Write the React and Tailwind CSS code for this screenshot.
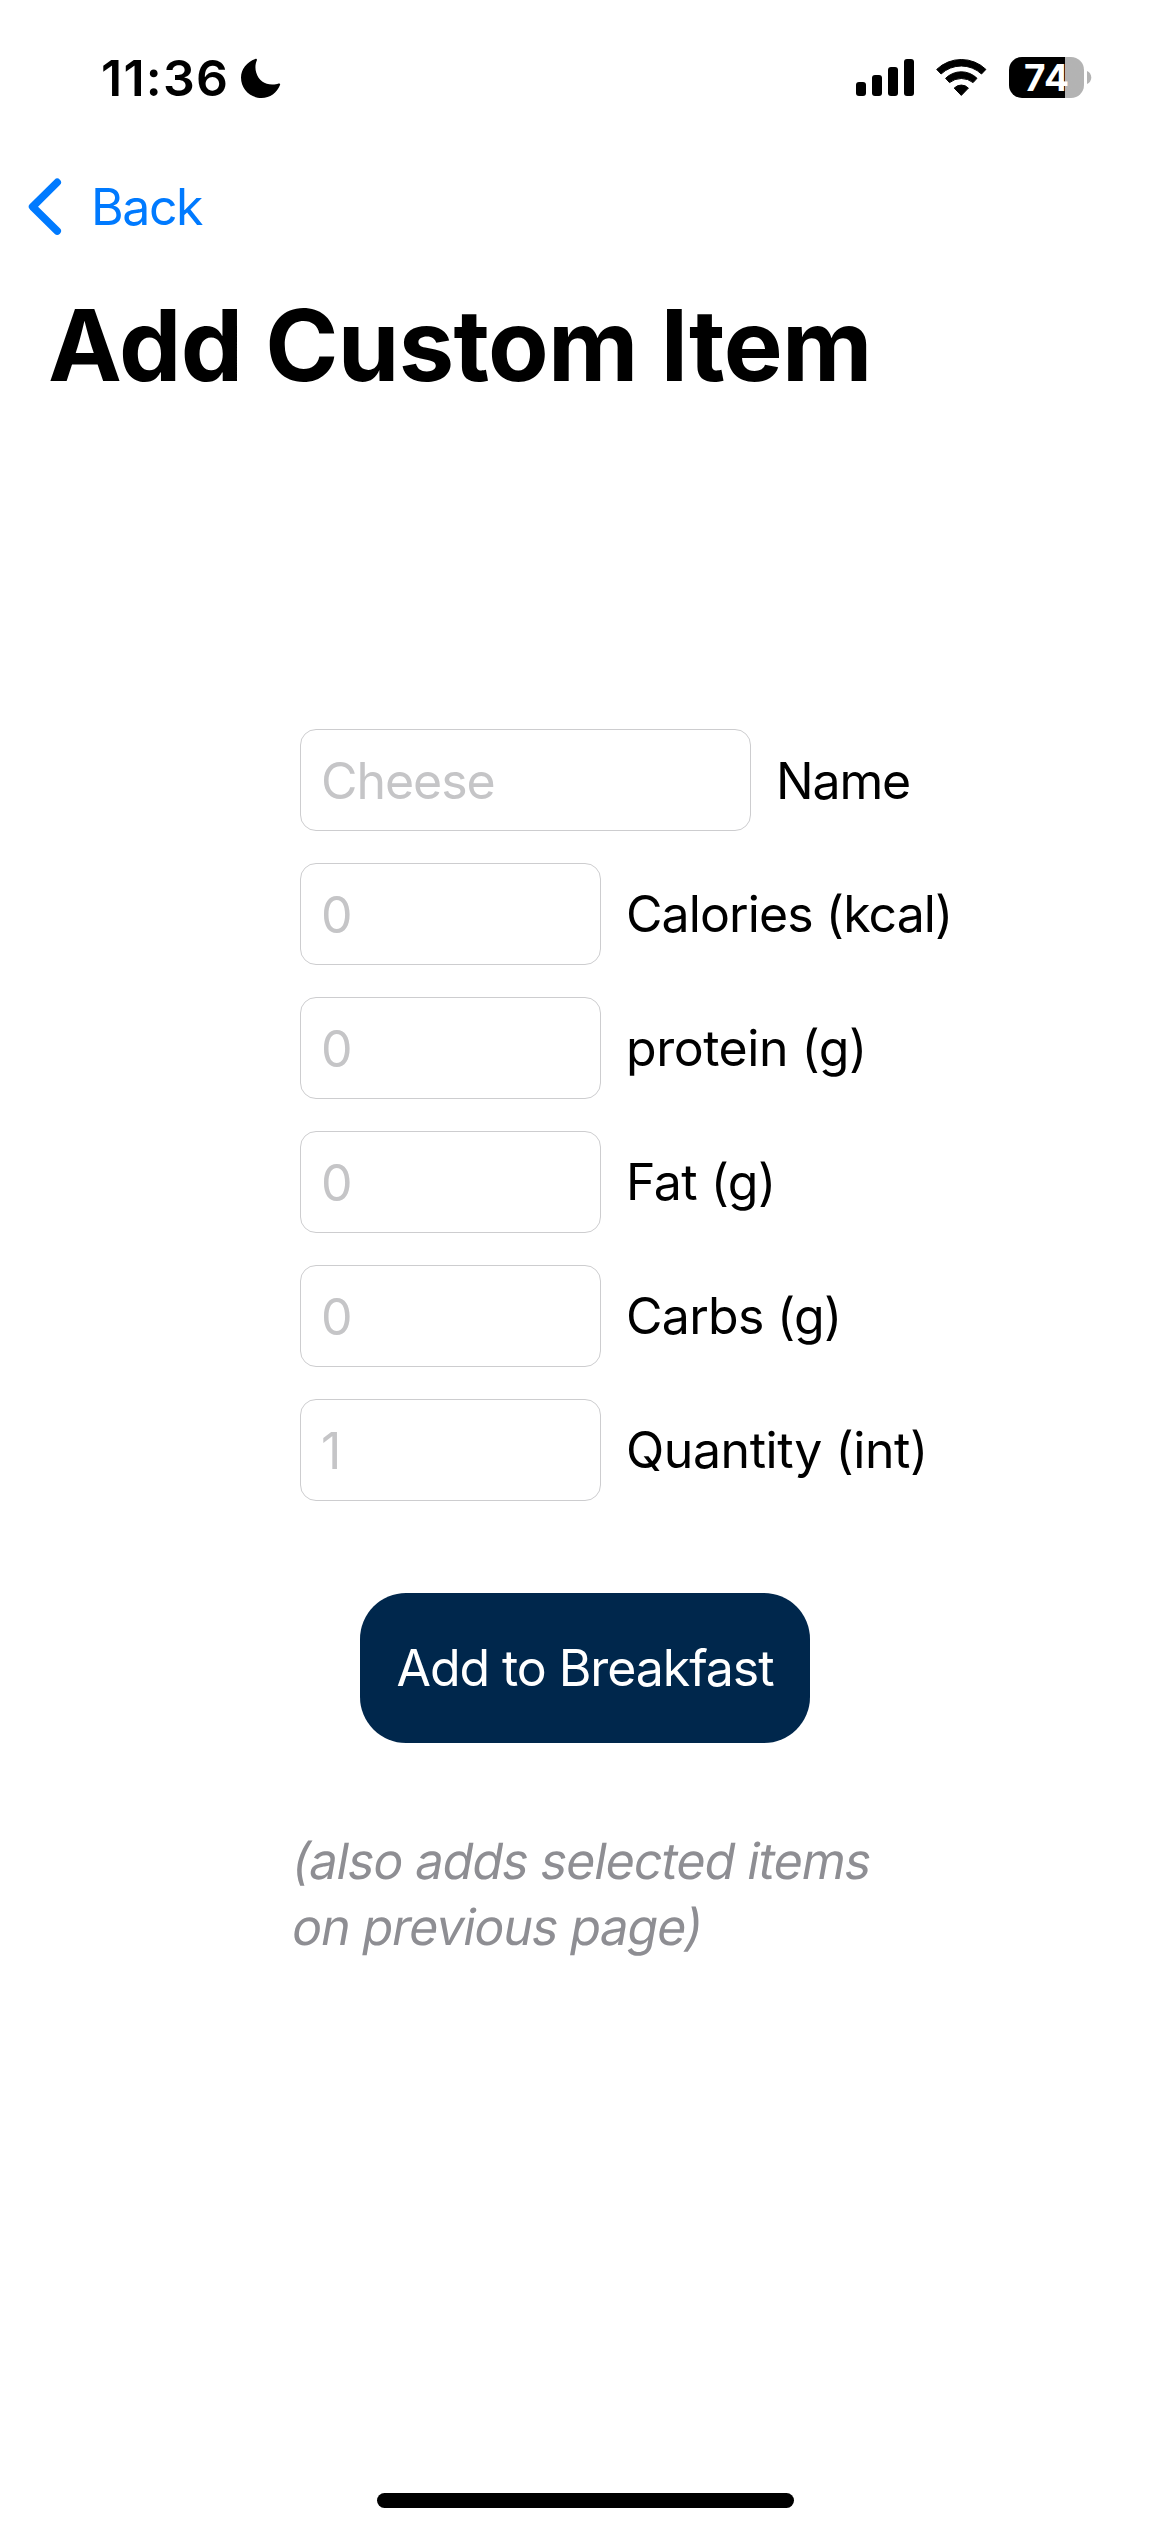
import React from "react";

const fields = [
  { label: "Name", placeholder: "Cheese", box: "w-[451px] tracking-[-1.06px]", text: "tracking-[-1.18px] pt-[2px]" },
  { label: "Calories (kcal)", placeholder: "0", box: "w-[301px]", text: "tracking-[-0.91px]" },
  { label: "protein (g)", placeholder: "0", box: "w-[301px]", text: "tracking-[-0.47px]" },
  { label: "Fat (g)", placeholder: "0", box: "w-[301px]", text: "tracking-[-0.52px]" },
  { label: "Carbs (g)", placeholder: "0", box: "w-[301px]", text: "tracking-[-0.7px]" },
  { label: "Quantity (int)", placeholder: "1", box: "w-[301px]", text: "tracking-[-0.43px]" },
];

function StatusBar() {
  return (
    <div className="flex h-[141px] shrink-0 items-start">
      <span className="mt-12 ml-[101px] w-[140px] text-[50px] leading-[60px] font-semibold tracking-[1.24px]">11:36</span>
      <svg className="mt-[58px]" width="40" height="40" viewBox="0 0 40 40">
        <path
          d="M14.2 .9C15.5 .3 16.3 1 15.8 2.4C14.2 6 14 10.5 15.2 14.6C17.5 22.5 24 26.8 31.6 26.6C34 26.5 35.8 26.1 37.6 25.5C38.9 25.1 39.5 25.9 39 27C36 34.7 29 40 20.5 40C9 40 0 31 0 19.6C0 11 6 3.8 14.2 .9Z"
          fill="#000"
        />
      </svg>
      <svg className="mt-[59px] ml-[575px]" width="58" height="37" viewBox="0 0 58 37">
        <rect x="0" y="23" width="10" height="14" rx="3" />
        <rect x="16" y="16" width="10" height="21" rx="3" />
        <rect x="32" y="8" width="10" height="29" rx="3" />
        <rect x="48" y="0" width="10" height="37" rx="3" />
      </svg>
      <svg className="mt-[59px] ml-[22px]" width="51" height="38" viewBox="0 0 51 38" stroke="#000" strokeWidth="1" strokeLinejoin="round">
        <path d="M.7 10.4A35.5 35.5 0 0 1 49.9 10.4L45.5 15A29.5 29.5 0 0 0 5.1 15Z" />
        <path d="M9.6 19.3A22.2 22.2 0 0 1 41 19.3L37.1 23.6A19 19 0 0 0 13.5 23.6Z" />
        <path d="M18.2 29.1A9.8 9.8 0 0 1 32.4 29.1L25.3 36.4Z" />
      </svg>
      <div className="mt-[57px] ml-[22px] flex h-[41px] w-[75px] items-center overflow-hidden rounded-[13px] bg-gradient-to-r from-black from-[56px] to-[#b3b3b3] to-[56px]">
        <span className="ml-[15px] text-[37px] leading-[41px] font-bold tracking-[0.6px] text-white">74</span>
      </div>
      <svg className="mt-[71px] ml-[3px]" width="5" height="13" viewBox="0 0 5 13">
        <path d="M0 0C2.6 1.2 4.3 3.6 4.3 6.5S2.6 11.8 0 13Z" fill="#b3b3b3" />
      </svg>
    </div>
  );
}

export default function App() {
  return (
    <div className="flex h-[2532px] w-[1170px] flex-col overflow-hidden bg-white font-[Inter,sans-serif] text-[50px] leading-[60px] text-black">
      <StatusBar />
      <button className="mt-9 flex h-[60px] shrink-0 items-center self-start pl-7 text-[#007aff]">
        <svg width="34" height="58" viewBox="0 0 34 58" fill="none" stroke="currentColor" strokeWidth="7.6" strokeLinecap="round" strokeLinejoin="round">
          <path d="M29.2 4.4L4.6 28.7L29.2 53" />
        </svg>
        <span className="ml-[29px] tracking-[-1.45px]">Back</span>
      </button>
      <h1 className="mt-12 ml-12 shrink-0 text-[99px] leading-[120px] font-bold tracking-[-0.68px] whitespace-nowrap">Add Custom Item</h1>
      <div className="mt-[324px] ml-[300px] flex flex-col gap-8">
        {fields.map((f) => (
          <label key={f.label} className="flex h-[102px] items-center gap-[25px]">
            <input
              className={`h-[102px] shrink-0 rounded-[16px] border border-[#cdcdcf] bg-white pt-[2px] pr-5 pl-[20px] outline-none placeholder:text-[#c5c5c7] placeholder:opacity-100 ${f.box}`}
              placeholder={f.placeholder}
            />
            <span className={`whitespace-nowrap ${f.text}`}>{f.label}</span>
          </label>
        ))}
      </div>
      <button className="mt-[92px] ml-[360px] h-[150px] w-[450px] shrink-0 rounded-[46px] bg-[#00274c] tracking-[-1.08px] whitespace-nowrap text-white">
        Add to Breakfast
      </button>
      <p className="mt-[85px] ml-[290px] flex shrink-0 flex-col items-start leading-[66px] whitespace-nowrap text-[#8e8e93]">
        <span className="origin-[0_50px] -skew-x-[10deg] tracking-[-0.92px]">(also adds selected items</span>
        <span className="origin-[0_50px] -skew-x-[10deg] tracking-[-1.04px]">on previous page)</span>
      </p>
      <div className="mt-auto mb-6 ml-[377px] h-[15px] w-[417px] shrink-0 rounded-full bg-black" />
    </div>
  );
}
